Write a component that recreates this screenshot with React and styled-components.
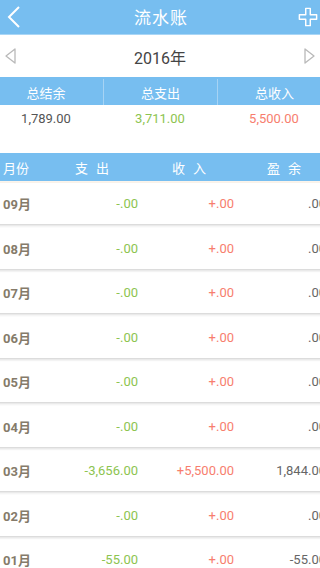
import React from "react";
import styled, { createGlobalStyle } from "styled-components";

const GlobalStyle = createGlobalStyle`
  html, body {
    margin: 0;
    padding: 0;
    background: #ffffff;
    font-family: Roboto, "Noto Sans CJK SC", sans-serif;
  }
`

const Page = styled.div`
  width: 320px;
  height: 568px;
  overflow: hidden;
  background: #ffffff;
`

const TopBar = styled.div`
  height: 34px;
  background: #77bef0;
  display: flex;
  align-items: center;
  justify-content: space-between;
  padding: 0 2px 0 4px;
  border-bottom: 1px solid #a9d6f6;
`

const Title = styled.div`
  color: #ffffff;
  font-size: 17px;
  font-family: "Noto Sans CJK SC", sans-serif;
  letter-spacing: 1px;
  margin-top: -2px;
`

const IconBtn = styled.div`
  width: 20px;
  height: 24px;
  display: flex;
  align-items: center;
  justify-content: center;
`

const YearRow = styled.div`
  height: 42px;
  display: flex;
  align-items: center;
  justify-content: space-between;
  padding: 0 4px;
  border-bottom: 2px solid #77bef0;
`

const Year = styled.div`
  color: #444444;
  font-size: 16px;
  font-family: Roboto, "Noto Sans CJK SC", sans-serif;
  padding-top: 2px;
`

const Summary = styled.div`
  width: 342px;
  margin-left: -11px;
`

const ThreeCols = styled.div`
  display: grid;
  grid-template-columns: 114px 114px 114px;
  height: ${props => props.$h}px;
  background: ${props => props.$head ? "#77bef0" : "#ffffff"};
`

const SumCell = styled.div`
  display: flex;
  align-items: center;
  justify-content: center;
  font-size: 13px;
  color: ${props => props.$color || "#ffffff"};
  border-left: ${props => props.$div ? "1px solid #a6d3f4" : "none"};
  font-family: Roboto, "Noto Sans CJK SC", sans-serif;
`

const Table = styled.div`
  margin-top: 22px;
  width: 342px;
  margin-left: -11px;
`

const TableHead = styled.div`
  height: 28px;
  background: #77bef0;
  display: grid;
  grid-template-columns: 70px 104px 96px 72px;
  align-items: center;
  color: #ffffff;
  font-size: 13px;
  font-family: "Noto Sans CJK SC", sans-serif;
  border-bottom: 2px solid #fbf4ec;
`

const HeadCell = styled.div`
  padding-left: ${props => props.$pl}px;
  letter-spacing: ${props => props.$ls || 0}px;
  white-space: nowrap;
`

const Row = styled.div`
  height: 41px;
  display: grid;
  grid-template-columns: 74px 75px 96px 92px;
  align-items: center;
  border-bottom: 1px solid #dcdcdc;
  box-shadow: 0 1px 2px rgba(0, 0, 0, 0.12);
  margin-bottom: 2.5px;
  font-size: 13px;
  font-family: Roboto, "Noto Sans CJK SC", sans-serif;
`

const Month = styled.div`
  padding-left: 14px;
  color: #857b6a;
  font-weight: bold;
`

const Num = styled.div`
  text-align: right;
  color: ${props => props.$color};
  white-space: nowrap;
`

const rows = [
  ["09月", "-.00", "+.00", ".00"],
  ["08月", "-.00", "+.00", ".00"],
  ["07月", "-.00", "+.00", ".00"],
  ["06月", "-.00", "+.00", ".00"],
  ["05月", "-.00", "+.00", ".00"],
  ["04月", "-.00", "+.00", ".00"],
  ["03月", "-3,656.00", "+5,500.00", "1,844.00"],
  ["02月", "-.00", "+.00", ".00"],
  ["01月", "-55.00", "+.00", "-55.00"],
]

function Back() {
  return (
    <svg width="14" height="24" viewBox="0 0 14 24">
      <path d="M12 2 L2 12 L12 22" fill="none" stroke="#fff" strokeWidth="2" />
    </svg>
  )
}

function Plus() {
  return (
    <svg width="22" height="22" viewBox="0 0 22 22">
      <path d="M8.5 1.5 h5 v7 h7 v5 h-7 v7 h-5 v-7 h-7 v-5 h7 z" fill="none" stroke="#fff" strokeWidth="1.6" strokeLinejoin="round" />
    </svg>
  )
}

function Tri({ dir }) {
  const d = dir === "left" ? "M11 2 L2 9 L11 16 Z" : "M2 2 L11 9 L2 16 Z"
  return (
    <svg width="13" height="18" viewBox="0 0 13 18">
      <path d={d} fill="none" stroke="#b9b9b9" strokeWidth="1.3" strokeLinejoin="round" />
    </svg>
  )
}

function App() {
  return (
    <Page>
      <GlobalStyle />
      <TopBar>
        <IconBtn><Back /></IconBtn>
        <Title>流水账</Title>
        <IconBtn><Plus /></IconBtn>
      </TopBar>
      <YearRow>
        <Tri dir="left" />
        <Year>2016年</Year>
        <Tri dir="right" />
      </YearRow>
      <Summary>
        <ThreeCols $head $h={26}>
          <SumCell>总结余</SumCell>
          <SumCell $div>总支出</SumCell>
          <SumCell $div>总收入</SumCell>
        </ThreeCols>
        <ThreeCols $h={26}>
          <SumCell $color="#555555">1,789.00</SumCell>
          <SumCell $color="#8dc450">3,711.00</SumCell>
          <SumCell $color="#f77e6e">5,500.00</SumCell>
        </ThreeCols>
      </Summary>
      <Table>
        <TableHead>
          <HeadCell $pl={14}>月份</HeadCell>
          <HeadCell $pl={16} $ls={8}>支出</HeadCell>
          <HeadCell $pl={9} $ls={8}>收入</HeadCell>
          <HeadCell $pl={8} $ls={8}>盈余</HeadCell>
        </TableHead>
        {rows.map(r => (
          <Row key={r[0]}>
            <Month>{r[0]}</Month>
            <Num $color="#8dc450">{r[1]}</Num>
            <Num $color="#f77e6e">{r[2]}</Num>
            <Num $color="#666666">{r[3]}</Num>
          </Row>
        ))}
      </Table>
    </Page>
  )
}

export default App
